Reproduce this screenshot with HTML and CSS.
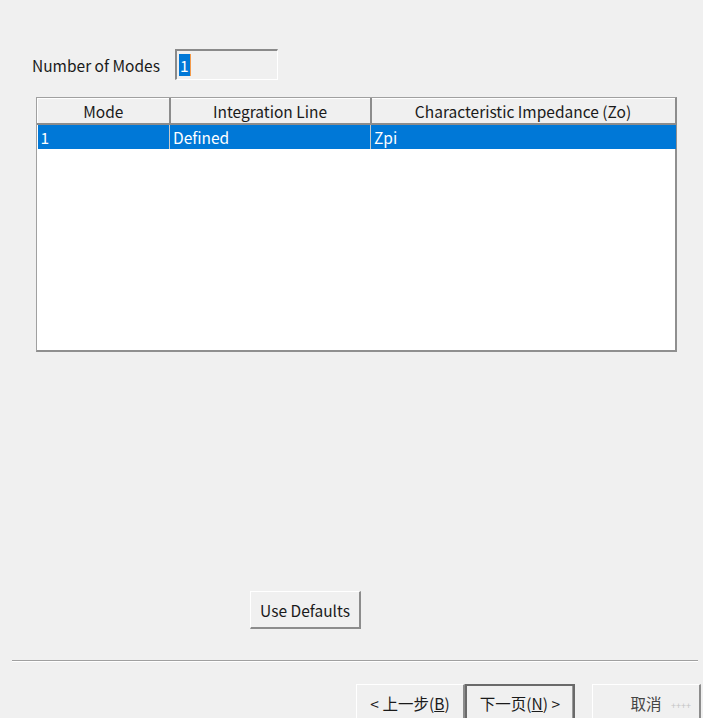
FILE: index.html
```html
<!DOCTYPE html>
<html lang="en">
<head>
  <meta charset="UTF-8" />
  <title>Modes</title>
  <link rel="stylesheet" href="styles.css">
</head>
<body>
<div class="dialog">
  <div class="modes-row">
    <span class="modes-label">Number of Modes</span>
    <div class="modes-input"><span class="sel">1</span></div>
  </div>

  <div class="grid-box">
    <table class="grid">
      <thead>
        <tr>
          <th class="c1">Mode</th>
          <th class="c2">Integration Line</th>
          <th class="c3">Characteristic Impedance (Zo)</th>
        </tr>
      </thead>
      <tbody>
        <tr class="selected">
          <td>1</td>
          <td>Defined</td>
          <td>Zpi</td>
        </tr>
      </tbody>
    </table>
  </div>

  <div class="defaults-row">
    <button class="btn defaults">Use Defaults</button>
  </div>

  <div class="separator"></div>

  <div class="footer">
    <button class="btn wiz">&lt; 上一步(<u>B</u>)</button>
    <button class="btn wiz default">下一页(<u>N</u>) &gt;</button>
    <button class="btn wiz cancel">取消<span class="mark">++++</span></button>
  </div>
</div>
</body>
</html>
```

FILE: styles.css
```css
html, body {
  margin: 0;
  height: 718px;
  overflow: hidden;
  background: #f0f0f0;
}
.dialog {
  font-family: "Noto Sans CJK SC", "Noto Sans", sans-serif;
  font-size: 15.5px;
  color: #1a1a1a;
  padding-top: 49px;
}
.modes-row {
  display: flex;
  align-items: center;
  padding-left: 32px;
  height: 31px;
}
.modes-label {
  width: 134px;
  overflow: hidden;
  white-space: nowrap;
  margin-right: 9px;
}
.modes-input {
  box-sizing: border-box;
  width: 103px;
  height: 31px;
  border-top: 2px solid #8a8a8a;
  border-left: 2px solid #8a8a8a;
  border-right: 1px solid #ffffff;
  border-bottom: 1px solid #ffffff;
  background: #f0f0f0;
  padding: 3px 2px;
  display: flex;
}
.sel {
  background: #0078d7;
  color: #fff;
  padding: 0 1px;
  line-height: 22px;
  border-right: 1px solid #f39a4a;
}
.grid-box {
  box-sizing: border-box;
  margin: 17px 0 0 36px;
  width: 641px;
  height: 255px;
  background: #fff;
  border-top: 1px solid #a0a0a0;
  border-left: 1px solid #a0a0a0;
  border-right: 2px solid #8f8f8f;
  border-bottom: 2px solid #8f8f8f;
}
.grid {
  border-collapse: collapse;
  table-layout: fixed;
  width: 638px;
}
.grid th {
  box-sizing: border-box;
  height: 25px;
  padding: 0;
  font-weight: normal;
  text-align: center;
  background: #f0f0f0;
  border-top: 1px solid #fff;
  border-left: 1px solid #fff;
  border-right: 2px solid #8c8c8c;
  border-bottom: 2px solid #8c8c8c;
}
.grid .c1 { width: 132px; }
.grid .c2 { width: 201px; }
.grid .c3 { width: 305px; }
.grid td {
  height: 24px;
  padding: 0 3px;
  border-left: 1px solid #c8c8c8;
  line-height: 24px;
}
.grid td:first-child { border-left: none; }
.grid tr.selected td {
  background: #0078d7;
  color: #fff;
}
.defaults-row {
  padding: 239px 0 0 250px;
}
.btn {
  font-family: "Noto Sans CJK SC", "Noto Sans", sans-serif;
  font-size: 15.5px;
  color: #1a1a1a;
  background: #f0f0f0;
  border-top: 1px solid #ffffff;
  border-left: 1px solid #ffffff;
  border-right: 2px solid #8c8c8c;
  border-bottom: 2px solid #8c8c8c;
  padding: 0;
  border-radius: 0;
}
.defaults {
  width: 111px;
  height: 38px;
}
.separator {
  margin: 31px 5px 0 12px;
  border-top: 1px solid #a0a0a0;
  border-bottom: 1px solid #fff;
}
.footer {
  display: flex;
  padding: 22px 0 0 356px;
}
.wiz {
  width: 109px;
  height: 38px;
}
.wiz u { text-decoration: underline; }
.wiz.default {
  width: 110px;
  border: 2px solid #6a6a6a;
  box-shadow: inset -1px -1px 0 #9a9a9a;
}
.wiz.cancel {
  margin-left: 17px;
  color: #444;
  position: relative;
}
.mark {
  position: absolute;
  right: 8px;
  top: 14px;
  font-size: 9px;
  color: #c4c4c4;
}
```
